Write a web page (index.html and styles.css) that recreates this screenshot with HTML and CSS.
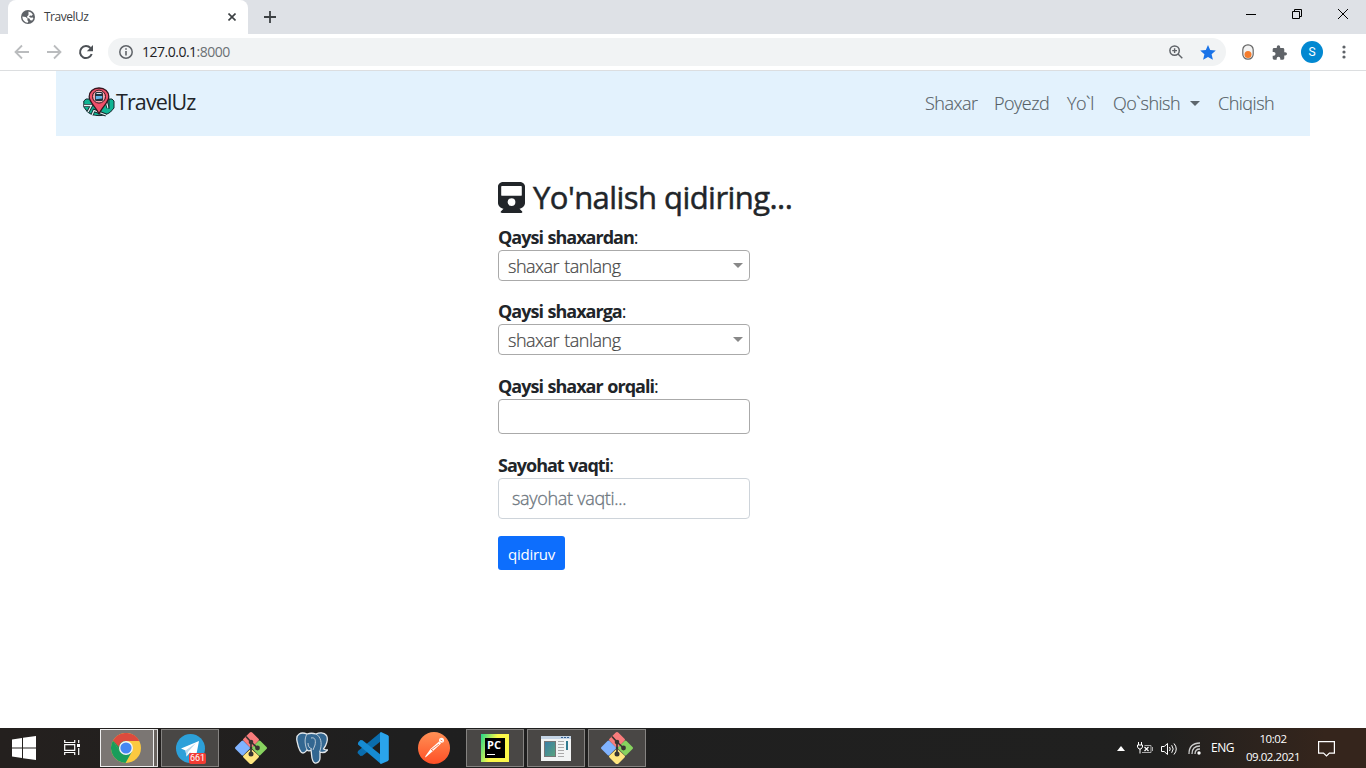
FILE: index.html
```html
<!DOCTYPE html>
<html lang="uz">
<head>
<meta charset="utf-8">
<title>TravelUz</title>
<link rel="stylesheet" href="styles.css">
</head>
<body>
<svg class="defs" width="0" height="0">
  <defs>
    <symbol id="git" viewBox="0 0 32 32">
      <path d="M14.500.8q1.500-1.500 3 0l6 6q1 1 0 2L17.500 15h-3l-6-6.200q-1-1 0-2z" fill="#f87c7c"/>
      <path d="M6.500 9q1-1 2 0l6 6q1 1 0 2l-6 6q-1 1-2 0l-6-6q-1-1 0-2z" fill="#80b3ff"/>
      <path d="M23.500 9q1-1 2 0l6 6q1 1 0 2l-6 6q-1 1-2 0l-6-6q-1-1 0-2z" fill="#87d35f"/>
      <path d="M15 17.500q1-1 2 0l6.500 6q1 1 0 2l-6 6q-1.500 1.500-3 0l-6-6q-1-1 0-2z" fill="#ffe680"/>
      <path d="M11 4.500L16 10v12M16 10l6.500 6" stroke="#383431" stroke-width="1.700" fill="none"/>
      <circle cx="16" cy="10" r="2.300" fill="#383431"/><circle cx="16" cy="22" r="2.500" fill="#383431"/><circle cx="22.500" cy="16" r="2.400" fill="#383431"/>
    </symbol>
  </defs>
</svg>
<header class="tabstrip">
  <div class="tab">
    <svg width="14" height="14" viewBox="0 0 14 14"><circle cx="7" cy="7" r="7" fill="#5f6368"/><path d="M1.400 6.500l3.200.4 2 1.600-.3 1.700 1 1-.5 1.500C3.800 12.500 1.300 10 1.400 6.500zM7.500 1.600l2.500.8 1.800 2-1 1.400-1.800-.3-1 1.200 1.800 1 2-.2.600.8-1.200 2.200-1.900-.2-.9-1.700-1.900-.7-.5-1.500 1.500-1.500z" fill="#fff"/></svg>
    <span class="tab-title">TravelUz</span>
    <svg class="tab-close" width="8" height="8" viewBox="0 0 8 8"><path d="M.5.5l7 7M7.500.5l-7 7" stroke="#3c4043" stroke-width="1.600"/></svg>
  </div>
  <svg class="new-tab" width="12" height="12" viewBox="0 0 12 12"><path d="M6 0v12M0 6h12" stroke="#3c4043" stroke-width="1.800"/></svg>
  <div class="window-buttons">
    <svg width="46" height="30" viewBox="0 0 46 30"><path d="M18 14.500h10" stroke="#000"/></svg>
    <svg width="46" height="30" viewBox="0 0 46 30"><path d="M18.500 11.500h7v7h-7zM20.500 11v-1.500h7v7H26" stroke="#000" fill="none"/></svg>
    <svg width="46" height="30" viewBox="0 0 46 30"><path d="M18 9l10 10M28 9l-10 10" stroke="#000"/></svg>
  </div>
</header>
<div class="toolbar">
  <div class="nav-buttons">
    <svg width="16" height="16" viewBox="0 0 16 16"><path d="M15 8H2M8 1.500L1.500 8 8 14.500" stroke="#babcbe" stroke-width="1.800" fill="none"/></svg>
    <svg width="16" height="16" viewBox="0 0 16 16"><path d="M1 8h13M8 1.500L14.500 8 8 14.500" stroke="#babcbe" stroke-width="1.800" fill="none"/></svg>
    <svg width="16" height="16" viewBox="0 0 16 16"><path d="M13.700 10A6 6 0 1 1 12.500 4" stroke="#4d5156" stroke-width="2" fill="none"/><path d="M15 1v6.200H8.800z" fill="#4d5156"/></svg>
  </div>
  <div class="omnibox">
    <svg width="14" height="14" viewBox="0 0 14 14"><circle cx="7" cy="7" r="6.200" stroke="#5f6368" stroke-width="1.500" fill="none"/><path d="M7 6v4.500M7 3.300v1.500" stroke="#5f6368" stroke-width="1.600"/></svg>
    <span class="url">127.0.0.1<span>:8000</span></span>
    <svg class="magnifier" width="14" height="14" viewBox="0 0 14 14"><circle cx="5.600" cy="5.600" r="4.700" stroke="#5f6368" stroke-width="1.500" fill="none"/><path d="M9 9l4.300 4.300M3.200 5.600H8M5.600 3.200V8" stroke="#5f6368" stroke-width="1.400"/></svg>
    <svg class="star" width="16" height="15" viewBox="0 0 16 15"><path d="M8 0l2.200 5.100 5.600.5-4.200 3.700 1.300 5.500L8 11.900l-4.900 2.900 1.300-5.500L.2 5.600l5.600-.5z" fill="#1a73e8"/></svg>
  </div>
  <div class="extensions">
    <svg width="12" height="16" viewBox="0 0 12 16"><rect x=".8" y=".8" width="10.400" height="14.400" rx="5" fill="#f3f3f3" stroke="#666" stroke-width="1.200"/><circle cx="6" cy="10.400" r="3.500" fill="#f57c2c"/></svg>
    <svg width="15" height="15" viewBox="1 1 22 21"><path d="M20.500 11H19V7a2 2 0 0 0-2-2h-4V3.500a2.500 2.500 0 0 0-5 0V5H4a2 2 0 0 0-2 2v3.800h1.500a2.700 2.700 0 0 1 0 5.400H2V20a2 2 0 0 0 2 2h3.800v-1.500a2.700 2.700 0 0 1 5.400 0V22H17a2 2 0 0 0 2-2v-4h1.500a2.500 2.500 0 0 0 0-5z" fill="#5f6368"/></svg>
    <span class="avatar">S</span>
    <svg width="4" height="14" viewBox="0 0 4 14"><circle cx="2" cy="2" r="1.600" fill="#5f6368"/><circle cx="2" cy="7" r="1.600" fill="#5f6368"/><circle cx="2" cy="12" r="1.600" fill="#5f6368"/></svg>
  </div>
</div>
<main class="page">
  <nav class="navbar">
    <a class="brand">
      <svg width="32" height="30" viewBox="0 0 32 30"><path d="M3 12h26l2 2v7l-3.500 4c-6 4.800-17 4.800-23 0L.8 20v-6z" fill="#10b594" stroke="#17272d"/><path d="M1 18.500h7.500L5 25M22.500 12l2.500 9M9 28l2-4.500L23 28" stroke="#17272d" stroke-width="3" fill="none"/><path d="M1 18.500h7.500L5 25M22.500 12l2.500 9M9 28l2-4.500L23 28" stroke="#e4f6f5" stroke-width="1.300" fill="none"/><path d="M26 12v10" stroke="#17272d"/><path d="M16 1c6 0 9.800 4 9.800 8.700 0 5.500-5.800 9-9.800 17-4-8-9.800-11.500-9.800-17C6.200 5 10 1 16 1z" fill="#f0506a" stroke="#34161f" stroke-width="1.300"/><circle cx="16" cy="9.600" r="6.500" fill="#f8a5ab" stroke="#34161f"/><rect x="12" y="5" width="8" height="9" rx="1.500" fill="#22323d"/><path d="M12.800 9h6.400v2.600l-6.400.6z" fill="#65b4e6"/><path d="M13.500 6.500h5" stroke="#d3dfe8"/></svg>
      <span>TravelUz</span>
    </a>
    <div class="links">
      <a class="l1">Shaxar</a><a class="l2">Poyezd</a><a class="l3">Yo`l</a><a class="l4"><span>Qo`shish</span><i class="caret"></i></a><a class="l5">Chiqish</a>
    </div>
  </nav>
  <form class="search">
    <h1><svg width="27" height="31" viewBox="0 0 27 31"><path fill-rule="evenodd" d="M5.500 0h16C24.500 0 27 2 27 4.500V21c0 3-2.700 5.300-5.500 5.800l2.500 2.500c.7.800.3 1.700-.8 1.700H3.800c-1.100 0-1.500-.9-.8-1.700l2.500-2.500C2.700 26.300 0 24 0 21V4.500C0 2 2.500 0 5.500 0zM4 4c-.6 0-.8.3-.8.800v8c0 .7.200 1 .8 1h19c.6 0 .8-.3.8-1v-8c0-.5-.2-.8-.8-.8zM13.500 16.200a3.900 3.900 0 1 0 0 7.800 3.900 3.900 0 0 0 0-7.800z" fill="#212529"/></svg><span>Yo'nalish qidiring...</span></h1>
    <label class="f1"><b>Qaysi shaxardan</b>:</label>
    <div class="select"><span>shaxar tanlang</span><i class="arrow"></i></div>
    <label class="f2"><b>Qaysi shaxarga</b>:</label>
    <div class="select"><span>shaxar tanlang</span><i class="arrow"></i></div>
    <label class="f3"><b>Qaysi shaxar orqali</b>:</label>
    <div class="multi"></div>
    <label class="f4"><b>Sayohat vaqti</b>:</label>
    <div class="date"><span>sayohat vaqti...</span></div>
    <div class="submit"><span>qidiruv</span></div>
  </form>
</main>
<footer class="taskbar">
  <div class="start"><svg width="24" height="24" viewBox="0 0 24 24"><path d="M0 3.400L10 2v9.500H0zM11 1.800L24 0v11.500H11zM0 12.500h10V22L0 20.600zM11 12.500h13V24l-13-1.800z" fill="#fff"/></svg></div>
  <div class="view"><svg width="17" height="15" viewBox="0 0 17 15"><path d="M.7 0v2.500h10V0M.7 15v-2.500h10V15M.7 4.700h10v5.600H.7zM14.700 0v3M14.700 8v7" stroke="#fff" stroke-width="1.200" fill="none"/><path d="M13 4h3v3h-3z" fill="#fff"/></svg></div>
  <div class="chrome"><div class="slot active"><svg width="30" height="30" viewBox="0 0 30 30"><circle cx="15" cy="15" r="15" fill="#fbc940"/><path d="M2 7.500A15 15 0 0 0 14.500 30L21 18.500 15 15 8.800 18.500z" fill="#199d5b"/><path d="M2 7.500l7 12L15 15V8z" fill="#199d5b"/><path d="M2 7.500A15 15 0 0 1 28.300 8H15c-4 0-6.500 2.500-7 6z" fill="#dd4b3e"/><circle cx="15" cy="15" r="7" fill="#f4f4f4"/><circle cx="15" cy="15" r="5.600" fill="#4587f3"/></svg></div><i></i></div>
  <div class="slot open telegram"><svg width="29" height="29" viewBox="0 0 29 29"><circle cx="14.500" cy="14.500" r="14.500" fill="#2ca0d9"/><path d="M5 14.500L23 7l-3 15.500-6-4-3.500 4-1-6z" fill="#fff"/><path d="M9.500 16.500L20 9l-8 9-1.500 4.500z" fill="#b9d8ea"/></svg><b class="badge">661</b></div>
  <div class="slot"><svg width="32" height="32"><use href="#git"/></svg></div>
  <div class="slot"><svg width="32" height="32" viewBox="0 0 32 32"><path d="M11 2C5-.5-.5 2 1 9c1 5 3 12 6 12 2 0 3-2 4-3 1 1 3 1 4 0 1 5 0 12 4 13 3 .5 5-2 5-5v-6c3 1 6 0 7.500-2-2 0-3-.3-4-1 3-4 5-10 3-13.500C28 0 23 .5 20 2c-3-1-6-1-9 0z" fill="#336791" stroke="#e2e7ea" stroke-width="1.300"/><path d="M11 2C8 7 9 13 11 18M20 2c5 3 6 9 4.500 15M24.500 17l-1 3M16 17c-3-1-4-3-4-6M15 6c4-1 5 2 4 7l-2 5" stroke="#c9d5de" stroke-width=".9" fill="none"/></svg></div>
  <div class="slot"><svg width="32" height="32" viewBox="0 0 32 32"><path d="M24 0L1 19l-.5 2 3 3 2-.3L24 9z" fill="#0a6dae"/><path d="M24 32L1 12.500v-2L3.500 8l2 .3L24 23z" fill="#168bd3"/><path d="M24 0l7 3.200.8 1.300v23L31 29l-7 3-1-1V1z" fill="#2aa4ec"/></svg></div>
  <div class="slot"><svg width="32" height="32" viewBox="0 0 32 32"><defs><linearGradient id="pm" x2="0" y2="1"><stop stop-color="#ff9055"/><stop offset="1" stop-color="#ff4f26"/></linearGradient></defs><circle cx="16" cy="16" r="16" fill="url(#pm)"/><circle cx="23.500" cy="8.300" r="2.500" fill="#fff"/><path d="M21 9.500l2 2-8 7.500-7 6-1 .5.500-1.500 5-7z" fill="#fff"/><path d="M13 18l8-6M15 19l-2-2M22.500 8l2 1" stroke="#f36b3a" stroke-width=".8"/></svg></div>
  <div class="slot open"><div class="pycharm"><b>PC</b><i></i></div></div>
  <div class="slot open"><svg width="30" height="25" viewBox="0 0 30 25"><defs><linearGradient id="wp" x2="1" y2="1"><stop stop-color="#397da8"/><stop offset="1" stop-color="#59a47c"/></linearGradient></defs><rect width="30" height="25" fill="#f2f4f4"/><rect width="30" height="3" fill="#c4d4e5"/><path d="M20 1.500h2M23 1.500h2M26 1.500h2" stroke="#335f92"/><rect x="3.500" y="5.500" width="11" height="15" fill="url(#wp)" stroke="#777"/><path d="M17 5.500h6M17 8.500h6M17 11.500h6M17 14.500h6M17 17.500h6M17 20.500h6" stroke="#aaa"/><path d="M26 5v9" stroke="#307b90" stroke-width="2"/></svg></div>
  <div class="slot open"><svg width="32" height="32"><use href="#git"/></svg></div>
  <div class="tray">
    <svg class="up" width="8" height="5" viewBox="0 0 8 5"><path d="M0 5l4-5 4 5z" fill="#fff"/></svg>
    <svg class="battery" width="16" height="13" viewBox="0 0 16 13"><path d="M1.500 0v3M4.500 0v3M.5 3h5v2L4 7H2L.5 5zM3 7v4.500" stroke="#fff" fill="none"/><path d="M5 10.500h9v-7H7.500M15.500 5v4" stroke="#aaa" fill="none"/><path d="M7.500 5l4 4M11.500 5l-4 4" stroke="#fff" stroke-width="1.200"/></svg>
    <svg class="sound" width="17" height="14" viewBox="0 0 17 14"><path d="M.5 4.500h2.700l3.300-3v11l-3.300-3H.5zM8.500 5q1.500 2 0 4M10.700 3.200q3 3.800 0 7.600M13 1.500q4.500 5.500 0 11" stroke="#fff" fill="none"/></svg>
    <svg class="wifi" width="13" height="13" viewBox="0 0 13 13"><path d="M1 12Q1 1 12 1M4 12q0-8 8-8M7 12q0-5 5-5" stroke="#ccc" stroke-width="1.300" fill="none"/><circle cx="11" cy="11" r="1.700" fill="#fff"/></svg>
    <span class="lang">ENG</span>
    <span class="clock"><span>10:02</span><span>09.02.2021</span></span>
    <svg class="notice" width="17" height="16" viewBox="0 0 17 16"><path d="M.6.600h15.800v11.500h-5L8.500 15l-3-2.900H.6z" stroke="#fff" stroke-width="1.200" fill="none"/></svg>
  </div>
</footer>
</body>
</html>
```
FILE: styles.css
```css
* { box-sizing: border-box; }
body { margin: 0; width: 1366px; height: 768px; overflow: hidden; display: flex; flex-direction: column; background: #fff; font-family: "Open Sans", "Noto Sans", sans-serif; color: #212529; white-space: nowrap; }
svg { display: block; flex: none; }
.defs { position: absolute; }
.tabstrip { height: 34px; background: #dee1e6; display: flex; padding-left: 8px; }
.tab { width: 240px; height: 34px; background: #fff; border-radius: 8px 8px 0 0; display: flex; align-items: center; padding: 0 12px 0 13px; }
.tab-title { font-size: 12px; letter-spacing: -.5px; color: #3c4043; margin: -1px 0 0 9px; }
.tab-close { margin-left: auto; }
.new-tab { margin: 11px 0 0 16px; }
.window-buttons { display: flex; margin-left: auto; }
.toolbar { height: 37px; border-bottom: 1px solid #dcdee0; display: flex; align-items: center; padding-left: 14px; }
.nav-buttons { display: flex; gap: 16px; width: 94px; }
.omnibox { width: 1118px; height: 28px; border-radius: 14px; background: #f1f3f4; display: flex; align-items: center; padding: 0 10px 0 11px; }
.url { font-size: 14px; letter-spacing: -.5px; margin: -2px 0 0 9px; color: #202124; }
.url span { color: #6b7074; }
.magnifier { margin-left: auto; }
.star { margin-left: 17px; }
.extensions { display: flex; align-items: center; margin-left: 16px; }
.extensions svg:nth-child(2) { margin-left: 18px; }
.avatar { width: 22px; height: 22px; border-radius: 50%; background: #0288d1; color: #fff; font: 12px/22px Roboto, sans-serif; text-align: center; margin: 0 19px 0 14px; }
.page { flex: 1; padding: 0 56px; }
.navbar { height: 65px; background: #e3f2fd; display: flex; justify-content: space-between; padding: 16px 34px 0 27px; }
.brand { display: flex; height: 30px; gap: 1px; }
.brand span { font-size: 21.5px; line-height: 30px; letter-spacing: -.9px; }
.links { display: flex; font-size: 18px; line-height: 32px; font-weight: 300; color: #555e65; letter-spacing: -.5px; -webkit-text-stroke: .15px #555e65; }
.l1 { width: 69px; }
.l2 { width: 73px; }
.l3 { width: 46px; }
.l4 { width: 105px; display: flex; }
.l5 { width: 58px; }
.caret { border: 5px solid transparent; border-top-color: #5d666d; border-bottom: 0; margin: 14px 0 0 10px; height: 0; }
.search { width: 340px; margin: 46px 0 0 442px; font-size: 18px; }
h1 { margin: 0; height: 45px; display: flex; gap: 8px; font-size: 31px; line-height: 31px; font-weight: 400; letter-spacing: -.55px; -webkit-text-stroke: .5px #212529; }
label { display: block; height: 25px; line-height: 25px; letter-spacing: -1px; word-spacing: 1px; margin-top: 18px; }
.f1 { margin-top: -1px; height: 24px; line-height: 23px; }
.select, .multi, .date { width: 252px; border: 1px solid #aaa; border-radius: 4px; }
.select { height: 31px; display: flex; align-items: center; justify-content: space-between; padding: 0 6px 0 9px; color: #444; font-weight: 300; letter-spacing: -.5px; word-spacing: 1px; -webkit-text-stroke: .2px #444; }
.arrow { border: 5px solid transparent; border-top-color: #888; border-bottom: 0; }
.f3 { margin-top: 19px; }
.multi { height: 35px; }
.f4 { margin-top: 19px; }
.date { height: 41px; border-color: #ced4da; line-height: 39px; padding-left: 13px; color: #6c757d; font-weight: 300; letter-spacing: -.3px; -webkit-text-stroke: .3px #6c757d; }
.submit { width: 67px; height: 34px; margin-top: 17px; border-radius: 3px; background: #0d6efd; color: #fff; font-size: 15px; line-height: 36px; padding-left: 10px; letter-spacing: -.25px; }
.taskbar { height: 40px; background: linear-gradient(90deg, #24201e, #1f1f1f 30%, #20201f 85%, #35251c 97%); display: flex; color: #fff; padding-top: 1px; }
.start { width: 48px; padding: 7px 0 0 12px; }
.view { width: 52px; padding: 11px 0 0 16px; }
.chrome { display: flex; gap: 0; width: 61px; }
.chrome i { width: 4px; height: 38px; border: 1px solid #ddd; border-left: 0; background: #69635f; }
.slot { width: 58px; height: 38px; display: flex; align-items: center; justify-content: center; margin-right: 3px; position: relative; }
.active { width: 54px; margin: 0; padding-right: 2px; background: #7b7673; border: 1px solid #eee; }
.open { background: #494745; border: 1px solid #858381; }
.badge { position: absolute; right: 12px; bottom: 2px; width: 17px; height: 11px; border-radius: 2px; background: #f23c34; font: 9px/11px Roboto, sans-serif; text-align: center; }
.pycharm { width: 28px; height: 28px; background: linear-gradient(110deg, #21d789, #fcf84a 45%); padding: 4px; }
.pycharm b { display: block; width: 20px; height: 20px; background: #000; font: bold 11px/13px "Open Sans", sans-serif; padding-left: 2px; }
.pycharm i { display: block; width: 8px; height: 1px; background: #fff; margin: -4px 0 0 2px; }
.tray { margin-left: auto; width: 249px; display: flex; align-items: center; font-size: 12px; }
.battery { margin-left: 12px; }
.sound { margin-left: 8px; }
.wifi { margin-left: 10px; }
.lang { width: 24px; margin: -2px 0 0 10px; letter-spacing: -.5px; }
.clock { display: flex; flex-direction: column; align-items: center; width: 56px; margin: -2px 0 0 10px; font-size: 11.5px; line-height: 18px; letter-spacing: -.45px; }
.notice { margin-left: 17px; }
```
